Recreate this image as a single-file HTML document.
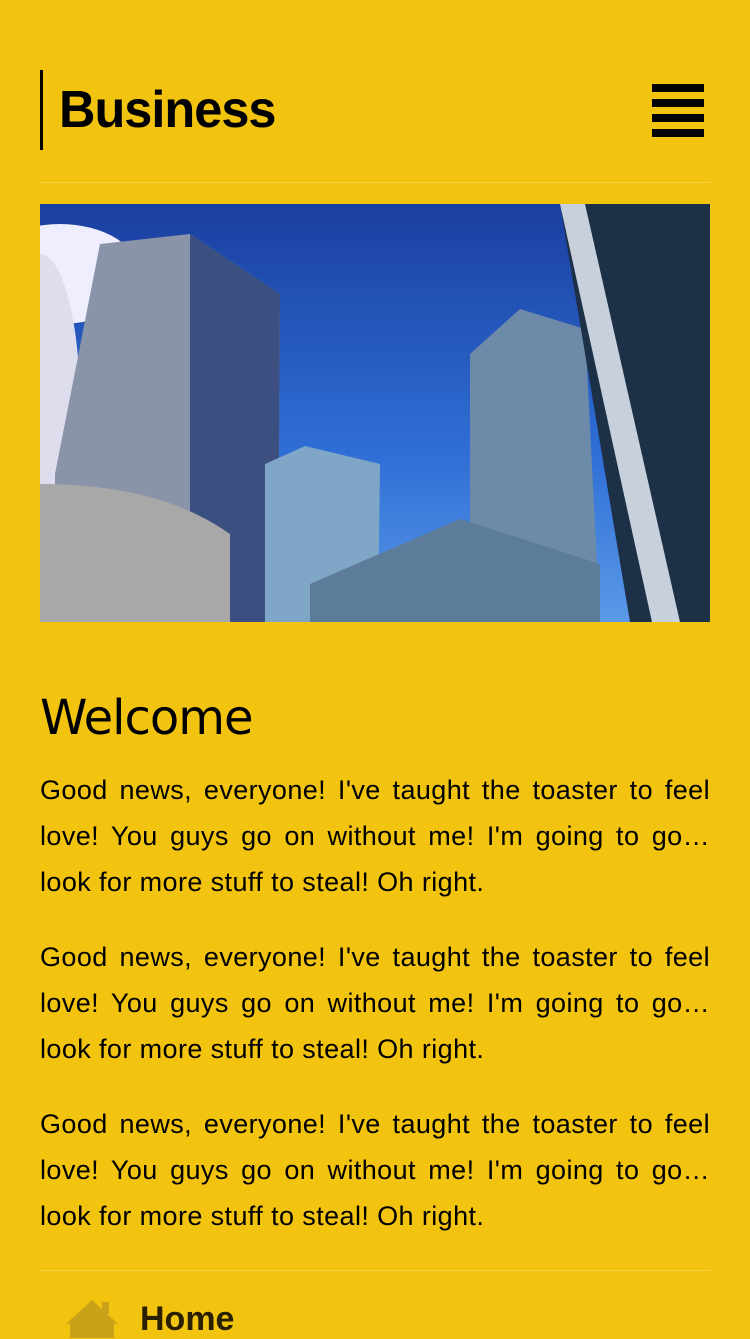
<!DOCTYPE html>
<html><head><meta charset="utf-8"><style>
body{margin:0;width:750px;height:1334px;overflow:hidden;background:#f2c40f;font-family:"Liberation Sans",sans-serif;color:#000;position:relative}
.logo{position:absolute;left:40px;top:70px;height:80px;border-left:3px solid #000}
.logo span{position:absolute;left:16px;top:10px;font-size:52px;font-weight:bold;letter-spacing:-1px;transform:scaleX(.97);transform-origin:left}
.burger{position:absolute;left:652px;top:84px;width:52px}
.burger div{height:8px;background:#000;margin-bottom:7px}
.hr{position:absolute;left:40px;width:670px;height:1px;background:#f5d04a}
.img{position:absolute;left:40px;top:204px;width:670px;height:418px;overflow:hidden;background:linear-gradient(#1a3fa0,#2f6fd6 60%,#5a9ae8)}
h1{position:absolute;left:40px;top:690px;margin:0;font-weight:normal;font-size:48px;font-family:"DejaVu Sans","Liberation Sans",sans-serif;letter-spacing:-1px}
.p{position:absolute;left:40px;width:670px;font-size:27px;line-height:46px;text-align:justify;letter-spacing:0.4px}
.home{position:absolute;left:140px;top:1300px;font-size:34px;font-weight:bold;color:#2a2000}
</style></head><body>
<div class="logo"><span>Business</span></div>
<div class="burger"><div></div><div></div><div></div><div></div></div>
<div class="hr" style="top:182px"></div>
<div class="img"><svg width="670" height="418">
<ellipse cx="20" cy="70" rx="80" ry="50" fill="#eef"/><ellipse cx="0" cy="200" rx="40" ry="150" fill="#dde"/>
<polygon points="15,270 60,40 150,30 240,90 238,418 15,418" fill="#8a94a8"/>
<polygon points="150,30 240,90 238,418 150,418" fill="#3b4f80"/>
<polygon points="225,260 265,242 340,260 338,418 225,418" fill="#7fa6c6"/>
<polygon points="430,150 480,105 545,125 560,418 430,418" fill="#6d8aa8"/>
<polygon points="520,0 670,0 670,418 590,418" fill="#1c3048"/>
<polygon points="520,0 545,0 640,418 612,418" fill="#c8d0dc"/>
<path d="M0,420 L0,280 Q120,280 190,330 L190,420 Z" fill="#a8a8a8"/>
<polygon points="270,380 420,315 560,360 560,418 270,418" fill="#5d7c99"/>
</svg></div>
<h1>Welcome</h1>
<div class="p" style="top:767px">Good news, everyone! I've taught the toaster to feel love! You guys go on without me! I'm going to go… look for more stuff to steal! Oh right.</div>
<div class="p" style="top:934px">Good news, everyone! I've taught the toaster to feel love! You guys go on without me! I'm going to go… look for more stuff to steal! Oh right.</div>
<div class="p" style="top:1101px">Good news, everyone! I've taught the toaster to feel love! You guys go on without me! I'm going to go… look for more stuff to steal! Oh right.</div>
<div class="hr" style="top:1270px"></div>
<svg style="position:absolute;left:64px;top:1298px" width="56" height="40"><polygon points="2,26 28,2 54,26 50,26 50,40 6,40 6,26" fill="#c9a21a"/><rect x="38" y="4" width="7" height="12" fill="#c9a21a"/></svg>
<div class="home">Home</div>
</body></html>
